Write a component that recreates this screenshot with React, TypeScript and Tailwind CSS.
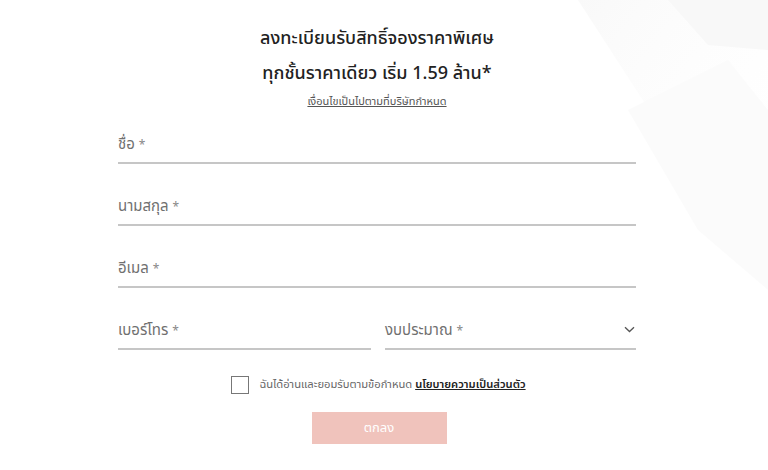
import React from "react";

const font = { fontFamily: '"Noto Sans", "Noto Sans Thai", Tahoma, sans-serif' };

function Field({ label, chevron }: { label: string; chevron?: boolean }) {
  return (
    <div className="flex h-[44px] items-center justify-between border-b-2 border-[#c6c6c6] pt-[5px]">
      <span className="text-[15px] text-[#707070]">
        {label} <span className="text-[12px] text-[#888]">*</span>
      </span>
      {chevron && (
        <svg width="11" height="7" viewBox="0 0 11 7" className="mr-[1px]">
          <path d="M1 1.2 L5.5 5.5 L10 1.2" fill="none" stroke="#555" strokeWidth="1.3" />
        </svg>
      )}
    </div>
  );
}

export default function App() {
  return (
    <div className="relative h-[470px] w-[768px] overflow-hidden bg-white" style={font}>
      <svg className="absolute right-0 top-0" width="230" height="320" viewBox="0 0 230 320">
        <defs>
          <linearGradient id="g1" x1="0" y1="0" x2="1" y2="1">
            <stop offset="0" stopColor="#f9f9f9" />
            <stop offset="1" stopColor="#ffffff" stopOpacity="0" />
          </linearGradient>
        </defs>
        <polygon points="40,0 230,0 230,260 150,170" fill="url(#g1)" />
        <polygon points="130,0 230,0 230,50 170,45" fill="#f8f8f8" />
        <polygon points="90,110 190,60 230,110 230,290 160,230" fill="#fafafa" opacity="0.8" />
      </svg>
      <div className="relative ml-[118px] w-[518px] pt-[20px]">
        <div className="text-center text-[18px] font-medium leading-[35px] text-[#222]">
          <div>ลงทะเบียนรับสิทธิ์จองราคาพิเศษ</div>
          <div>ทุกชั้นราคาเดียว เริ่ม 1.59 ล้าน*</div>
        </div>
        <div className="mt-[3px] text-center text-[11px] text-[#555] underline">
          เงื่อนไขเป็นไปตามที่บริษัทกำหนด
        </div>
        <div className="mt-[10px] flex flex-col gap-[18px]">
          <Field label="ชื่อ" />
          <Field label="นามสกุล" />
          <Field label="อีเมล" />
          <div className="flex gap-[14px]">
            <div className="w-[253px]">
              <Field label="เบอร์โทร" />
            </div>
            <div className="flex-1">
              <Field label="งบประมาณ" chevron />
            </div>
          </div>
        </div>
        <div className="mt-[26px] flex items-center justify-center gap-[10px] pl-[3px]">
          <div className="h-[18px] w-[18px] border border-[#777] bg-white" />
          <span className="text-[11.2px] text-[#666]">
            ฉันได้อ่านและยอมรับตามข้อกำหนด{" "}
            <span className="font-semibold text-[#222] underline">นโยบายความเป็นส่วนตัว</span>
          </span>
        </div>
        <div className="mt-[18px] flex justify-center pl-[4px]">
          <div className="flex h-[32px] w-[135px] items-center justify-center bg-[#f0c3bc] text-[13px] text-white">
            ตกลง
          </div>
        </div>
      </div>
    </div>
  );
}
